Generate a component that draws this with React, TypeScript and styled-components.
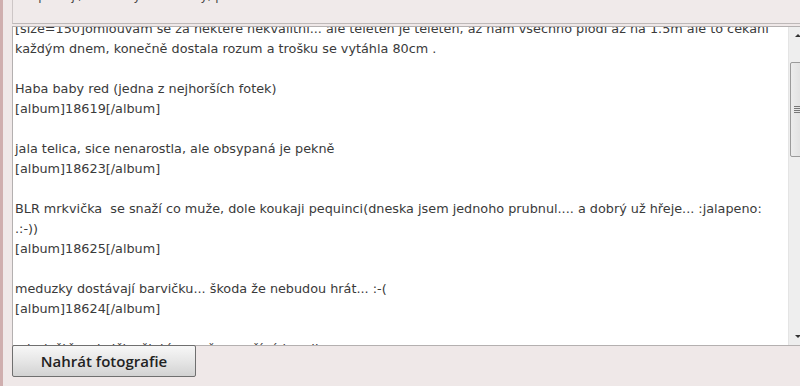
import styled, { createGlobalStyle } from "styled-components";

const Global = createGlobalStyle`
  html, body {
    margin: 0;
    padding: 0;
    overflow: hidden;
    background: #efe8e8;
  }
  #root {
    height: 386px;
  }
`

const Page = styled.div`
  height: 386px;
  border-left: 3px solid #cfaeae;
  padding-left: 9px;
  display: flex;
  flex-direction: column;
  overflow: hidden;
`

const TopField = styled.div`
  height: 24px;
  background: #f0eaea;
  border-left: 1px solid #cdc6c6;
  border-bottom: 1px solid #bdb8b8;
  display: flex;
  align-items: flex-end;
  padding: 0 0 20px 9px;
  box-sizing: border-box;
  overflow: hidden;
  font-family: "DejaVu Sans", Verdana, sans-serif;
  font-size: 12px;
  line-height: 14px;
  color: #444;
  white-space: nowrap;
`

const Editor = styled.div`
  margin-top: 2px;
  width: calc(100% + 6px);
  height: 320px;
  display: flex;
  border: 1px solid #b4b0b0;
  border-right: none;
  background: #fff;
  box-sizing: border-box;
`

const TextArea = styled.div`
  flex: 1;
  overflow: hidden;
  padding-left: 2px;
`

const Content = styled.div`
  margin-top: -8px;
  font-family: "DejaVu Sans", Verdana, sans-serif;
  font-size: 12.8px;
  line-height: 20px;
  color: #3a3a3a;
  white-space: pre-wrap;
`

const ScrollTrack = styled.div`
  width: 17px;
  background: #eeeeee;
  border-left: 1px solid #e4e4e4;
  display: flex;
  flex-direction: column;
  align-items: center;
`

const Arrow = styled.div<{ $down?: boolean }>`
  height: 17px;
  width: 100%;
  display: flex;
  align-items: center;
  justify-content: center;
  margin-top: ${p => (p.$down ? "auto" : "0")};

  &::after {
    content: "";
    border-left: 3px solid transparent;
    border-right: 3px solid transparent;
    ${p => (p.$down ? "border-top: 3px solid #333;" : "border-bottom: 3px solid #333;")}
  }
`

const Thumb = styled.div`
  margin-top: 18px;
  width: 15px;
  height: 95px;
  box-sizing: border-box;
  border: 1px solid #9a9a9a;
  border-radius: 2px;
  background: linear-gradient(to right, #ececec, #dedede);
  display: flex;
  align-items: center;
  justify-content: center;
`

const Grip = styled.div`
  width: 7px;
  height: 7px;
  background: repeating-linear-gradient(to bottom, #777 0 1px, transparent 1px 2px);
`

const UploadButton = styled.button`
  margin-top: -1px;
  width: 184px;
  height: 32px;
  border: 1px solid #6f6f6f;
  border-radius: 2px;
  background: linear-gradient(to bottom, #f7f7f7 0%, #e6e6e6 50%, #d2d2d2 100%);
  font-family: "Open Sans", "DejaVu Sans", sans-serif;
  font-weight: 600;
  font-size: 15px;
  color: #222;
  padding: 0;
  cursor: pointer;
`

const text = `[size=150]omlouvám se za některé nekvalitní... ale teleteň je teleteň, až nám všechno plodí až na 1.5m ale to čekání
každým dnem, konečně dostala rozum a trošku se vytáhla 80cm .

Haba baby red (jedna z nejhorších fotek)
[album]18619[/album]

jala telica, sice nenarostla, ale obsypaná je pekně
[album]18623[/album]

BLR mrkvička  se snaží co muže, dole koukaji pequinci(dneska jsem jednoho prubnul.... a dobrý už hřeje... :jalapeno:
.:-))
[album]18625[/album]

meduzky dostávají barvičku... škoda že nebudou hrát... :-(
[album]18624[/album]

a tu ještě mrkvička žlutá, co už se začíná barvit`

const App = () => {
  return (
    <>
      <Global />
      <Page>
        <TopField>Např. čejí, menší bývá zákonky, pokud zachcete text</TopField>
        <Editor>
          <TextArea>
            <Content>{text}</Content>
          </TextArea>
          <ScrollTrack>
            <Arrow />
            <Thumb>
              <Grip />
            </Thumb>
            <Arrow $down />
          </ScrollTrack>
        </Editor>
        <div>
          <UploadButton>Nahrát fotografie</UploadButton>
        </div>
      </Page>
    </>
  )
}

export default App
